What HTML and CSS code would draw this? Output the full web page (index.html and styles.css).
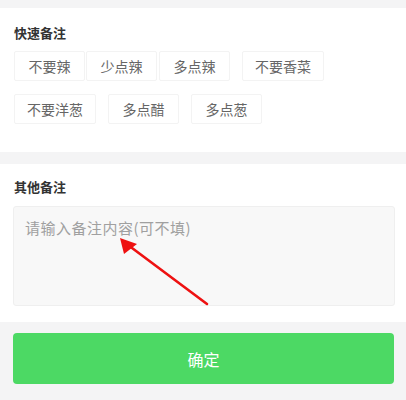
FILE: index.html
```html
<!DOCTYPE html>
<html lang="zh">
<head>
<meta charset="utf-8">
<link rel="stylesheet" href="styles.css">
</head>
<body>
<div class="page">
  <div class="band band-top"></div>
  <section class="section quick">
    <h3 class="title">快速备注</h3>
    <div class="tags">
      <span class="tag joined">不要辣</span>
      <span class="tag joined2">少点辣</span>
      <span class="tag">多点辣</span>
      <span class="tag">不要香菜</span>
      <span class="tag">不要洋葱</span>
      <span class="tag">多点醋</span>
      <span class="tag">多点葱</span>
    </div>
  </section>
  <div class="band band-mid"></div>
  <section class="section other">
    <h3 class="title">其他备注</h3>
    <textarea class="note" placeholder="请输入备注内容(可不填)"></textarea>
  </section>
  <div class="footer">
    <button class="confirm">确定</button>
  </div>
  <svg class="arrow" width="406" height="400" viewBox="0 0 406 400">
    <line x1="207" y1="304" x2="128" y2="245" stroke="#ee1111" stroke-width="2.6" stroke-linecap="round"/>
    <polygon points="120,238 137,244 124,254" fill="#ee1111"/>
  </svg>
</div>
</body>
</html>
```
FILE: styles.css
```css
html, body {
  margin: 0;
  padding: 0;
  background: #ffffff;
  font-family: "Noto Sans CJK SC", "Noto Sans", sans-serif;
}
.page {
  position: relative;
  width: 406px;
  height: 400px;
  overflow: hidden;
  display: flex;
  flex-direction: column;
}
.band {
  background: #f4f4f5;
}
.band-top { height: 8px; }
.band-mid { height: 12px; }
.section {
  background: #fff;
  padding: 0 13px 0 14px;
}
.quick {
  padding-top: 17px;
  padding-bottom: 15px;
}
.title {
  margin: 0;
  font-size: 13px;
  line-height: 16px;
  font-weight: bold;
  color: #333;
}
.tags {
  display: flex;
  flex-wrap: wrap;
  margin-top: 10px;
}
.tag {
  box-sizing: border-box;
  min-width: 71px;
  height: 30px;
  margin: 0 12px 13px 0;
  padding: 0 12px;
  border: 1px solid #f3f3f3;
  border-radius: 2px;
  font-size: 14px;
  line-height: 28px;
  color: #666;
  text-align: center;
  background: #fff;
}
.tag.joined { margin-right: 1px; }
.tag.joined2 { margin-right: 2px; }
.other {
  padding-top: 15px;
  padding-bottom: 16px;
}
.note {
  display: block;
  box-sizing: border-box;
  width: 382px;
  height: 100px;
  margin: 11px 0 0 -1px;
  padding: 11px 11px;
  border: 1px solid #efefef;
  border-radius: 3px;
  background: #f8f8f8;
  resize: none;
  font-family: "Noto Sans CJK SC", "Noto Sans", sans-serif;
  font-size: 15px;
  line-height: 20px;
  letter-spacing: 0.5px;
  color: #333;
  outline: none;
}
.note::placeholder { color: #a0a0a0; }
.footer {
  flex: 1;
  background: #f4f4f5;
  padding: 11px 12px 0 13px;
}
.confirm {
  display: block;
  width: 381px;
  height: 51px;
  border: none;
  border-radius: 4px;
  background: #4cd964;
  color: #fff;
  font-family: "Noto Sans CJK SC", "Noto Sans", sans-serif;
  font-size: 16px;
  padding: 0;
}
.arrow {
  position: absolute;
  top: 0;
  left: 0;
  pointer-events: none;
}
```
